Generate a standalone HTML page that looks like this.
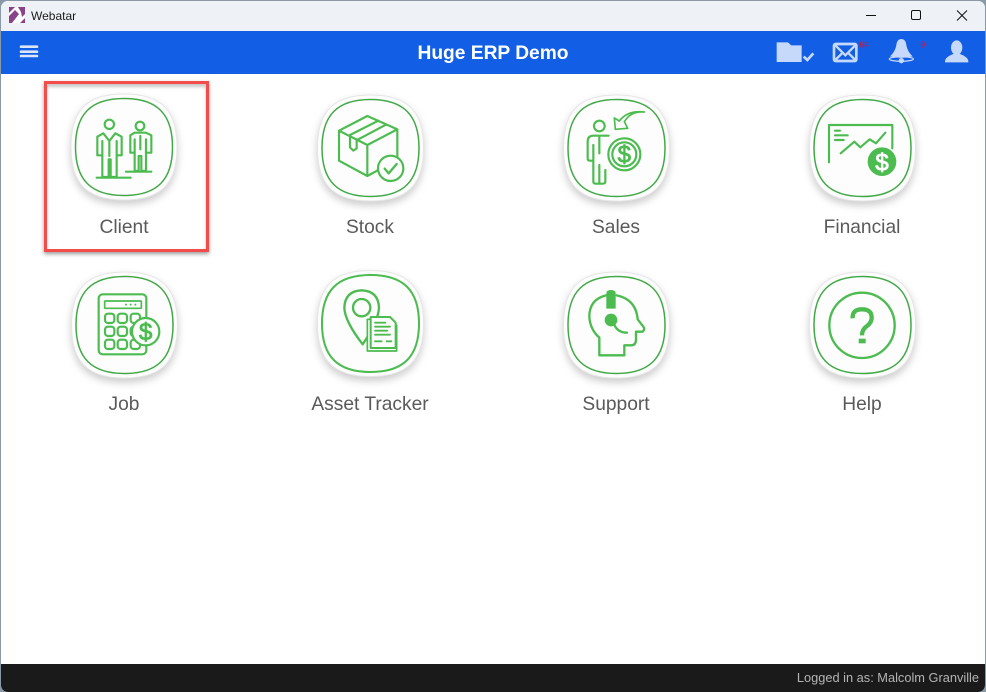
<!DOCTYPE html>
<html>
<head>
<meta charset="utf-8">
<style>
html,body{margin:0;padding:0;width:986px;height:692px;overflow:hidden;background:#8a99a8;font-family:"Liberation Sans",sans-serif}
#win{position:absolute;left:1px;top:1px;width:984px;height:691px;background:#fff;border-radius:7px 7px 7px 7px;overflow:hidden}
#title{position:absolute;left:0;top:0;width:984px;height:30px;background:#eef2f7}
#ttext{position:absolute;left:30px;top:8px;font-size:12px;color:#1a1a1a;line-height:14px}
#head{position:absolute;left:0;top:30px;width:984px;height:43px;background:#125fe6}
#htext{position:absolute;left:0;right:0;top:1px;text-align:center;line-height:43px;font-size:19.2px;font-weight:bold;color:#fff}
#foot{position:absolute;left:0;top:663px;width:984px;height:28px;background:#1a1a1a}
#ftext{position:absolute;right:6px;top:7px;font-size:12.8px;line-height:14px;color:#b4b4b4}
.lbl{position:absolute;width:200px;text-align:center;font-size:19.2px;line-height:22px;color:#5a5a5a}
#sel{position:absolute;left:44px;top:81px;width:159px;height:165px;border:3px solid #f44b4b;box-shadow:0 2px 4px rgba(0,0,0,.4),inset 0 3px 3px rgba(0,0,0,.22)}
svg{position:absolute;left:0;top:0}
.tile{filter:drop-shadow(0 4px 4px rgba(0,0,0,.2))}
.i{fill:none;stroke:#4cbb50;stroke-width:6.5;stroke-linejoin:round;stroke-linecap:round}
.f{fill:#4cbb50;stroke:none}
.d{fill:#4cbb50;stroke:#4cbb50;stroke-width:2.5;font-family:"Liberation Sans",sans-serif;font-size:72px;text-anchor:middle}
.n{font-family:"Liberation Sans",sans-serif;font-size:26px;fill:#f00a20;text-rendering:geometricPrecision}
</style>
</head>
<body>
<div id="win">
<div id="title"></div>
<div id="ttext">Webatar</div>
<div id="head"><div id="htext">Huge ERP Demo</div></div>
<div id="foot"><div id="ftext">Logged in as: Malcolm Granville</div></div>
</div>

<div class="lbl" style="left:24px;top:217px">Client</div>
<div class="lbl" style="left:270px;top:217px">Stock</div>
<div class="lbl" style="left:516px;top:217px">Sales</div>
<div class="lbl" style="left:762px;top:217px">Financial</div>
<div class="lbl" style="left:24px;top:394px">Job</div>
<div class="lbl" style="left:270px;top:394px">Asset Tracker</div>
<div class="lbl" style="left:516px;top:394px">Support</div>
<div class="lbl" style="left:762px;top:394px">Help</div>
<div id="sel"></div>

<svg width="986" height="692" viewBox="0 0 986 692">
<defs>
<g id="tile">
<path class="tile" d="M0,-53 C37,-53 53,-37 53,0 C53,37 37,53 0,53 C-37,53 -53,37 -53,0 C-53,-37 -37,-53 0,-53Z" fill="#fdfdfd" stroke="#e6e6e6" stroke-width="1"/>
<path d="M0,-48.5 C33,-48.5 48.5,-33 48.5,0 C48.5,33 33,48.5 0,48.5 C-33,48.5 -48.5,33 -48.5,0 C-48.5,-33 -33,-48.5 0,-48.5Z" fill="#fdfdfd" stroke="#43a948" stroke-width="1.5"/>
</g>
</defs>

<!-- title logo -->
<g transform="translate(0,-1)">
<rect x="9" y="8" width="16" height="16" fill="#fff"/>
<path d="M9,8 H15 L9,14Z M9,24 V17 L15,11 L19,15 L12,24Z M18,8 H25 V15 L22,18 L21,13Z M20,24 L25,19 V24Z" fill="#8a4288"/>
</g>
<!-- window controls -->
<path d="M866,15.5 H876" stroke="#111" stroke-width="1"/>
<rect x="911.5" y="10.5" width="9" height="9" rx="1.5" fill="none" stroke="#111" stroke-width="1"/>
<path d="M957,10.5 L967,20.5 M967,10.5 L957,20.5" stroke="#111" stroke-width="1"/>

<!-- hamburger -->
<path d="M21,46.7 H37 M21,51.7 H37 M21,56 H37" stroke="#dbe6fb" stroke-width="2.6" stroke-linecap="round"/>

<!-- header icons -->
<g transform="translate(760,0) scale(.33333)">
<path d="M50,127 H84 L94,136 H125 V186 H50Z" fill="#c6d9fb"/>
<path d="M131,170 L142,180 L160,160" fill="none" stroke="#c6d9fb" stroke-width="8"/>
<rect x="222" y="132" width="67" height="51" rx="5" fill="none" stroke="#c6d9fb" stroke-width="8"/>
<path d="M226,136 L256,166 L286,136 M226,180 L248,158 M286,180 L264,158" fill="none" stroke="#c6d9fb" stroke-width="7"/>
<path d="M424,117 Q437,117 439,135 Q442,155 458,169 Q424,178 390,169 Q406,155 409,135 Q411,117 424,117Z" fill="#c6d9fb"/>
<ellipse cx="424" cy="177" rx="36" ry="7" fill="none" stroke="#c6d9fb" stroke-width="4"/>
<circle cx="424" cy="182" r="8" fill="#c6d9fb"/>
<ellipse cx="590" cy="143" rx="17" ry="22" fill="#c6d9fb"/>
<path d="M555,187 Q553,172 580,162 H600 Q627,172 625,187Z" fill="#c6d9fb"/>
<text x="298" y="143" class="n">64</text>
<text x="481" y="143" class="n">9</text>
</g>

<!-- tiles -->
<use href="#tile" x="124" y="147"/>
<use href="#tile" x="370.5" y="148"/>
<use href="#tile" x="616.5" y="148"/>
<use href="#tile" x="862.5" y="148"/>
<use href="#tile" x="124.5" y="325"/>
<use href="#tile" x="370.5" y="323.5"/>
<use href="#tile" x="616.5" y="325"/>
<use href="#tile" x="862.5" y="325"/>
<path transform="translate(370.5,323.5)" d="M0,-48.5 C33,-48.5 48.5,-33 48.5,0 C48.5,33 33,48.5 0,48.5 C-33,48.5 -48.5,33 -48.5,0 C-48.5,-33 -33,-48.5 0,-48.5Z" fill="none" stroke="#4cbb50" stroke-width="2"/>

<!-- client -->
<g transform="translate(40,76) scale(.33333)" class="i">
<circle cx="208" cy="145" r="14"/>
<path d="M190,172 L172,182 V238 H187 V303 H206 V250 H212 V303 H230 V238 H245 V182 L226,172 L208,195Z M187,195 V238 M230,195 V238 M208,195 V240"/>
<path d="M170,305 H272"/>
<circle cx="300" cy="150" r="13"/>
<path d="M284,170 L271,178 V230 H284 V285 H296 V240 H304 V285 H318 V230 H334 V178 L318,170Z M284,190 V230 M318,190 V230 M301,180 V220"/>
<path d="M258,287 H334"/>
</g>

<!-- stock -->
<g transform="translate(310,90) scale(.33333)" class="i">
<path d="M87,122 L172,78 L262,118 L172,165Z M87,122 V212 L172,258 V165 M262,118 V200 M172,258 L205,240"/>
<path d="M120,135 L205,92 M143,149 L228,104 M120,135 V172 L130,182 L140,175 V148"/>
<circle cx="242" cy="235" r="38" fill="#fdfdfd"/>
<path d="M224,236 L236,250 L260,222" stroke-width="7"/>
</g>

<!-- sales -->
<g transform="translate(556,90) scale(.33333)" class="i">
<circle cx="130" cy="108" r="16"/>
<path d="M158,137 H112 Q95,137 95,155 V205 Q95,212 103,212 H112 M112,165 V275 Q112,281 120,281 H140 Q148,281 148,275 V240 M130,281 V225 M130,142 V190"/>
<circle cx="205" cy="193" r="48" fill="#fdfdfd"/>
<circle cx="205" cy="193" r="36"/>
<path d="M265,66 Q225,62 205,95 L215,115 L178,118 L175,84 L190,93 Q215,60 265,66Z" stroke-width="5"/>
<text x="205" y="218" class="d">$</text>
</g>

<!-- financial -->
<g transform="translate(802,90) scale(.33333)" class="i">
<path d="M81,217 V105 H271 V175"/>
<path d="M99,122 H114 M99,136 H137 M99,150 H125"/>
<path d="M116,190 L157,155 L175,172 L203,148 L222,160 L250,128"/>
<circle cx="240" cy="215" r="43" class="f"/>
<text x="240" y="242" class="d" style="fill:#fff;stroke:#fff">$</text>
</g>

<!-- job -->
<g transform="translate(64,266) scale(.33333)" class="i">
<rect x="104" y="85" width="143" height="180" rx="12"/>
<rect x="122" y="105" width="110" height="22" rx="2" stroke-width="5"/>
<path d="M186,116 h.1 M200,116 h.1 M214,116 h.1" stroke-width="6"/>
<rect x="123" y="143" width="28" height="28" rx="9"/><rect x="161" y="143" width="28" height="28" rx="9"/><rect x="200" y="143" width="28" height="28" rx="9"/>
<rect x="123" y="182" width="28" height="28" rx="9"/><rect x="161" y="182" width="28" height="28" rx="9"/><rect x="200" y="182" width="28" height="28" rx="9"/>
<rect x="123" y="221" width="28" height="28" rx="9"/><rect x="161" y="221" width="28" height="28" rx="9"/><rect x="200" y="221" width="28" height="28" rx="9"/>
<circle cx="245" cy="197" r="41" fill="#fdfdfd"/>
<text x="245" y="222" class="d">$</text>
</g>

<!-- asset tracker -->
<g transform="translate(310,266) scale(.33333)" class="i">
<path d="M158,235 Q104,165 103,125 Q105,75 155,73 Q205,75 207,125 Q205,165 158,235Z" stroke-width="7"/>
<circle cx="155" cy="125" r="26" stroke-width="7"/>
<path d="M172,160 H240 L260,178 V255 H172Z" fill="#fdfdfd" stroke-width="5"/>
<path d="M182,153 H240 L257,170 V246 H182Z" fill="#fdfdfd" stroke-width="6"/>
<path d="M195,170 H226 M195,182 H240 M195,194 H232 M195,206 H240 M195,226 H215 M230,226 H244" stroke-width="5.5"/>
</g>

<!-- support -->
<g transform="translate(556,266) scale(.33333)" class="i">
<path d="M150,88 Q100,100 100,152 Q102,190 130,215 V268 H205 V238 H225 Q240,238 240,220 V197 H260 Q268,190 262,182 L245,160 Q240,100 182,88" stroke-width="7"/>
<path d="M151,128 V82 Q151,72 165,72 Q179,72 179,82 V128Z" class="f"/>
<circle cx="165" cy="162" r="19" class="f"/>
<path d="M175,176 Q185,200 213,200" stroke-width="7"/>
</g>

<!-- help -->
<g transform="translate(802,266) scale(.33333)" class="i">
<circle cx="180" cy="178" r="98" stroke-width="7"/>
<path d="M152,157 Q150,130 180,130 Q209,130 209,155 Q209,170 195,180 Q180,190 180,208" stroke-width="13" stroke-linecap="butt"/>
<rect x="170" y="218" width="21" height="14" class="f"/>
</g>
</svg>
</body>
</html>
